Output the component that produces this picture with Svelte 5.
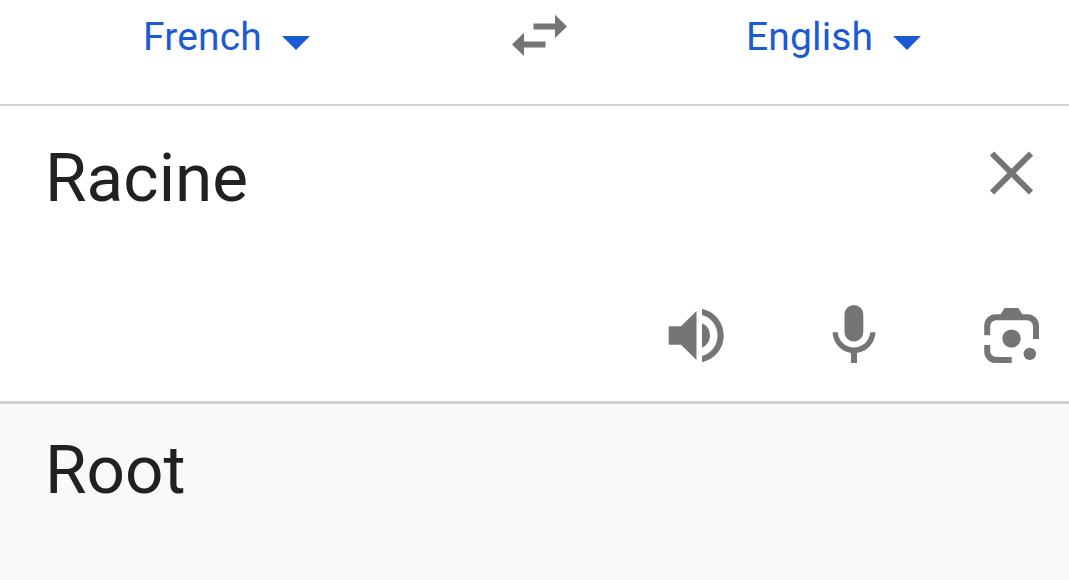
<script>
	let from = 'French';
	let to = 'English';
	let source = 'Racine';
	let result = 'Root';
</script>

<main class="translator">
	<header class="languages">
		<button class="language from">
			<span class="name">{from}</span>
			<svg class="caret" width="28" height="14" viewBox="0 0 28 14">
				<path d="M0 0H28L14 14z" />
			</svg>
		</button>
		<button class="swap" aria-label="Swap languages">
			<svg width="56" height="43" viewBox="0 0 56 43">
				<path d="M43 .7L55 12.4 43 24V15.500H21.500V9.400H43zM12 18.700L0 30.400 12 42V33.500H33.500V27.500H12z" />
			</svg>
		</button>
		<button class="language to">
			<span class="name">{to}</span>
			<svg class="caret" width="28" height="14" viewBox="0 0 28 14">
				<path d="M0 0H28L14 14z" />
			</svg>
		</button>
	</header>

	<section class="source">
		<div class="source-row">
			<div class="text">{source}</div>
			<button class="clear" aria-label="Clear">
				<svg width="44" height="44" viewBox="0 0 44 44">
					<path class="line" d="M3 2.500L42 41.500M42 2.500L3 41.500" />
				</svg>
			</button>
		</div>
		<div class="tools">
			<button aria-label="Listen">
				<svg width="56" height="56" viewBox="0 0 56 56">
					<path d="M.7 18.300H13L28.500 3V52L13 36.700H.7zM34 15.300C39 17.400 42 22 42 27.500S39 37.600 34 39.700z" />
					<path d="M34 1C46.500 3.500 55.700 14.200 55.700 27.500S46.500 51.500 34 54V48C43.200 45.600 49.500 37.500 49.500 27.500S43.200 9.400 34 7z" />
				</svg>
			</button>
			<button aria-label="Speak">
				<svg width="44" height="59" viewBox="0 0 44 59">
					<rect x="12.500" y="0" width="18.800" height="36.500" rx="9.400" />
					<path d="M.5 27.300H5.700C6.700 36.500 13.500 42.500 22 42.500S37.300 36.500 38.300 27.300H43.500C42.800 38.300 35 46.500 25 48V58H19V48C9 46.500 1.200 38.300 .5 27.300z" />
				</svg>
			</button>
			<button aria-label="Search with camera">
				<svg width="56" height="56" viewBox="0 0 56 56">
					<path d="M20.500 0H34.500L38.300 6.200H43.500A11.500 11.500 0 0 1 55 17.700V31H49V18.200A6 6 0 0 0 43 12.200H12.200A6 6 0 0 0 6.200 18.200V27.300H.2V17.700A11.500 11.500 0 0 1 11.700 6.200H16.700z" />
					<path d="M.2 37H6.200V43A6 6 0 0 0 12.200 49H27.700V55H11.700A11.500 11.500 0 0 1 .2 43.500z" />
					<circle cx="27.500" cy="30.600" r="9.200" />
					<circle cx="45.800" cy="45.900" r="6.200" />
				</svg>
			</button>
		</div>
	</section>

	<section class="result">
		<div class="text">{result}</div>
	</section>
</main>

<style>
	:global(body) {
		margin: 0;
		overflow: hidden;
	}
	.translator {
		display: flex;
		flex-direction: column;
		height: 580px;
		background: #fff;
		font-family: Roboto, sans-serif;
	}
	button {
		display: flex;
		padding: 0;
		border: none;
		background: none;
		color: #757575;
		font: inherit;
		cursor: pointer;
	}
	svg {
		display: block;
		fill: currentColor;
	}
	.languages {
		display: grid;
		grid-template-columns: 512px 56px 1fr;
		align-items: start;
		box-sizing: border-box;
		height: 106px;
		border-bottom: 2px solid #d2d2d2;
	}
	.language {
		align-items: flex-start;
		padding-top: 14px;
		color: #1a5ad2;
		font-size: 39px;
		line-height: 46px;
	}
	.name {
		letter-spacing: 0.15px;
	}
	.from {
		padding-left: 143px;
	}
	.to {
		padding-left: 178px;
	}
	.caret {
		margin: 22px 0 0 20px;
	}
	.swap {
		padding-top: 14px;
	}
	.source {
		display: flex;
		flex-direction: column;
		justify-content: space-between;
		box-sizing: border-box;
		height: 298px;
		padding: 32px 29px 37px 45px;
		border-bottom: 3px solid #cecece;
	}
	.source-row {
		display: flex;
		justify-content: space-between;
	}
	.text {
		color: #202122;
		font-size: 67.5px;
		line-height: 80px;
	}
	.clear {
		margin: 13px 7.500px 0 0;
	}
	.line {
		fill: none;
		stroke: currentColor;
		stroke-width: 6;
	}
	.tools {
		display: flex;
		justify-content: flex-end;
		align-items: flex-end;
		gap: 108px;
	}
	.result {
		flex: 1;
		padding: 26px 45px 0;
		background: #f8f9fb;
	}
</style>
